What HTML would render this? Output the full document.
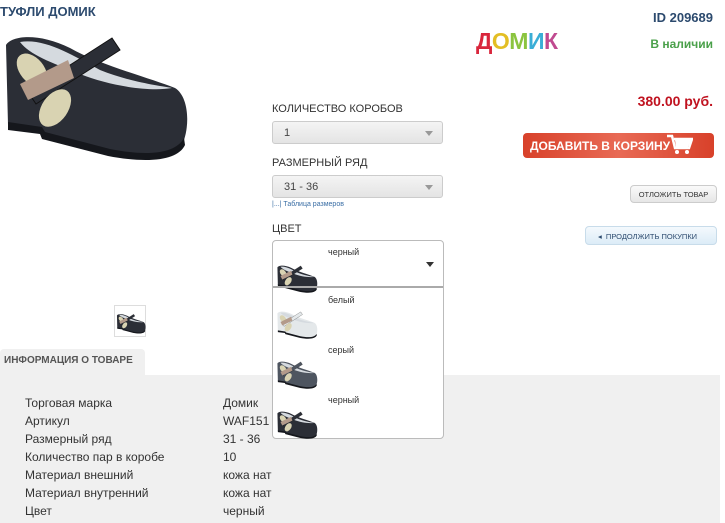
<!DOCTYPE html>
<html><head><meta charset="utf-8">
<style>
*{margin:0;padding:0;box-sizing:border-box}
body{width:725px;height:523px;overflow:hidden;background:#fff;font-family:"Liberation Sans",Arial,sans-serif;position:relative;color:#333}
.a{position:absolute}
.sel{position:absolute;left:272px;width:171px;height:23px;border:1px solid #ccc;border-radius:3px;background:linear-gradient(#f4f4f4,#e4e4e4);font-size:11px;color:#444;padding:5px 0 0 11px}
.sel:after{content:"";position:absolute;right:9px;top:9px;border-left:4px solid transparent;border-right:4px solid transparent;border-top:5px solid #999}
.lbl{position:absolute;left:272px;font-size:11px;color:#333}
.row{position:absolute;font-size:12px;color:#333}
.opt{position:absolute;left:55px;font-size:9px;color:#333}
</style></head><body>
<svg width="0" height="0" style="position:absolute">
<defs>
<symbol id="shoe" viewBox="0 25 190 150">
<path d="M6,45 C12,35 40,33 70,48 C100,65 150,78 175,88 C188,96 190,122 184,140 C178,156 150,160 110,152 L45,135 L42,130 L8,125 Z" fill="currentColor"/>
<path d="M8,122 L42,127 L45,132 L110,149 C150,157 176,153 184,138 L185,145 C178,160 150,164 108,156 L42,139 L40,134 L8,130 Z" fill="#15171c"/>
<path d="M20,42 C45,38 72,55 100,70 C130,82 160,86 172,88 C150,92 110,86 80,74 C50,62 30,55 20,42 Z" fill="#d5dadf"/>
<path d="M28,92 L112,38 L120,50 L36,104 Z" fill="currentColor" stroke="#111" stroke-width="1"/>
<ellipse cx="32" cy="70" rx="12" ry="19" transform="rotate(-40 32 70)" fill="#d9d3b2"/>
<ellipse cx="55" cy="108" rx="13" ry="21" transform="rotate(35 55 108)" fill="#d9d3b2"/>
<path d="M20,84 L68,60 L74,78 L28,100 Z" fill="#b39a8a"/>
</symbol>
</defs>
</svg>

<div class="a" style="left:0;top:4px;font-size:13px;font-weight:bold;color:#2c4a6e">ТУФЛИ ДОМИК</div>
<div class="a" style="right:12px;top:10px;font-size:13px;font-weight:bold;color:#2c4a6e">ID 209689</div>

<svg class="a" style="left:0;top:25px;color:#2b2e36" width="190" height="150"><use href="#shoe"/></svg>

<div class="a" style="left:476px;top:28px;font-size:23px;font-weight:900;letter-spacing:-0.5px">
<span style="color:#d9263c">Д</span><span style="color:#e3be24">О</span><span style="color:#8bc43f">М</span><span style="color:#3aaed6">И</span><span style="color:#c04a90">К</span></div>
<div class="a" style="right:12px;top:37px;font-size:12px;font-weight:bold;color:#4aa04a">В наличии</div>
<div class="a" style="right:12px;top:93px;font-size:14px;font-weight:bold;color:#c0121f">380.00 руб.</div>

<div class="a" style="left:523px;top:133px;width:191px;height:25px;border-radius:4px;background:linear-gradient(90deg,#d8412a,#e86a55 50%,#d8412a);color:#fff;font-size:12px;font-weight:bold;padding:6px 0 0 7px">ДОБАВИТЬ В КОРЗИНУ
<svg class="a" style="left:144px;top:1px" width="26" height="22" viewBox="0 0 26 22"><path d="M0,2 L5,2 L8,14 L22,14 L25,5 L7,5" fill="none" stroke="#fff" stroke-width="2.5"/><path d="M8,6 L24,6 L21,13 L9,13 Z" fill="#fff"/><circle cx="10" cy="18" r="2" fill="#fff"/><circle cx="20" cy="18" r="2" fill="#fff"/></svg></div>

<div class="a" style="left:630px;top:185px;width:87px;height:18px;border:1px solid #ccc;border-radius:4px;background:linear-gradient(#fafafa,#e6e6e6);font-size:7.5px;color:#333;text-align:center;padding-top:4px">ОТЛОЖИТЬ ТОВАР</div>
<div class="a" style="left:585px;top:226px;width:132px;height:19px;border:1px solid #c8dcea;border-radius:4px;background:linear-gradient(#f4f9fd,#dcecf7);font-size:7.5px;color:#2c4a6e;padding:5px 0 0 12px">◂&nbsp;&nbsp;ПРОДОЛЖИТЬ ПОКУПКИ</div>

<div class="lbl" style="top:103px">КОЛИЧЕСТВО КОРОБОВ</div>
<div class="sel" style="top:121px">1</div>
<div class="lbl" style="top:157px">РАЗМЕРНЫЙ РЯД</div>
<div class="sel" style="top:175px">31 - 36</div>
<div class="a" style="left:272px;top:201px;font-size:7px;color:#3a6ea5">|...| Таблица размеров</div>
<div class="lbl" style="top:223px">ЦВЕТ</div>

<div class="a" style="left:114px;top:305px;width:32px;height:32px;border:1px solid #ddd;background:#fff">
<svg class="a" style="left:1px;top:6px;color:#2b2e36" width="30" height="24"><use href="#shoe"/></svg></div>

<div class="a" style="left:0;top:349px;width:145px;height:28px;background:#f0f0f0;border-radius:4px 4px 0 0;font-size:10px;font-weight:bold;color:#555;padding:6px 0 0 4px">ИНФОРМАЦИЯ О ТОВАРЕ</div>
<div class="a" style="left:0;top:375px;width:720px;height:148px;background:#f0f0f0"></div>

<div class="row" style="left:25px;top:396px">Торговая марка</div><div class="row" style="left:223px;top:396px">Домик</div>
<div class="row" style="left:25px;top:414px">Артикул</div><div class="row" style="left:223px;top:414px">WAF151</div>
<div class="row" style="left:25px;top:432px">Размерный ряд</div><div class="row" style="left:223px;top:432px">31 - 36</div>
<div class="row" style="left:25px;top:450px">Количество пар в коробе</div><div class="row" style="left:223px;top:450px">10</div>
<div class="row" style="left:25px;top:468px">Материал внешний</div><div class="row" style="left:223px;top:468px">кожа нат</div>
<div class="row" style="left:25px;top:486px">Материал внутренний</div><div class="row" style="left:223px;top:486px">кожа нат</div>
<div class="row" style="left:25px;top:504px">Цвет</div><div class="row" style="left:223px;top:504px">черный</div>

<div class="a" style="left:272px;top:240px;width:172px;height:199px;border:1px solid #bbb;border-radius:4px;background:#fff;z-index:5">
 <div class="opt" style="top:6px">черный</div>
 <svg class="a" style="left:3px;top:22px;color:#2b2e36" width="42" height="33"><use href="#shoe"/></svg>
 <div class="a" style="right:9px;top:21px;border-left:4px solid transparent;border-right:4px solid transparent;border-top:5px solid #333"></div>
 <div class="a" style="left:0;top:45px;width:170px;height:2px;background:#aaa"></div>
 <div class="opt" style="top:54px">белый</div>
 <svg class="a" style="left:3px;top:68px;color:#e4e8ea" width="42" height="33"><use href="#shoe"/></svg>
 <div class="opt" style="top:104px">серый</div>
 <svg class="a" style="left:3px;top:118px;color:#4e5560" width="42" height="33"><use href="#shoe"/></svg>
 <div class="opt" style="top:154px">черный</div>
 <svg class="a" style="left:3px;top:168px;color:#2b2e36" width="42" height="33"><use href="#shoe"/></svg>
</div>
</body></html>
